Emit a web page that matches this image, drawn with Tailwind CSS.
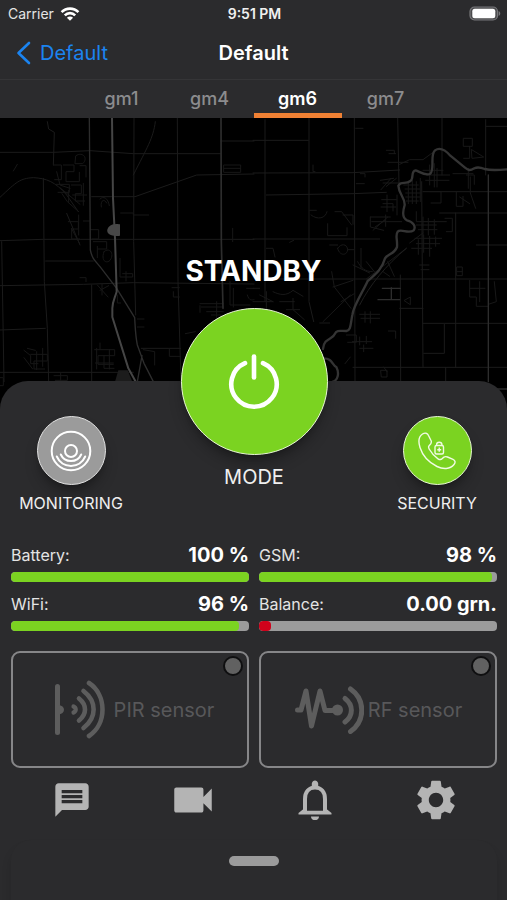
<!DOCTYPE html>
<html lang="en">
<head>
<meta charset="utf-8">
<meta name="viewport" content="width=device-width, initial-scale=1">
<title>Default</title>
<script src="https://cdn.jsdelivr.net/npm/@tailwindcss/browser@4"></script>
</head>
<body class="flex min-h-screen flex-col bg-[#2b2b2d] font-['Inter','Liberation_Sans',sans-serif] text-white">

<!-- Status bar -->
<div class="grid h-7 grid-cols-3 items-center pl-2 pr-1.5 text-sm leading-4">
  <div class="flex items-center gap-1.5 text-[#e4e4e4]">
    <span>Carrier</span>
    <svg class="h-4 w-5" viewBox="0 0 20 16" fill="none" stroke="#fff" stroke-width="2.6" aria-hidden="true">
      <path d="M1.6 6.2C6.2 1.4 13.8 1.4 18.4 6.2"/>
      <path d="M4.8 9.3C7.7 6.4 12.3 6.4 15.2 9.3"/>
      <path d="M10 14.8 6.9 11.7C8.6 10 11.4 10 13.1 11.7Z" fill="#fff" stroke="none"/>
    </svg>
  </div>
  <div class="text-center font-semibold text-[#f0f0f0]">9:51 PM</div>
  <svg class="h-4 w-8 justify-self-end" viewBox="0 0 32 16" aria-hidden="true">
    <rect x="1" y="1" width="27.500" height="13" rx="4.500" fill="#4b4b4d" stroke="#77777a" stroke-width="1.200"/>
    <rect x="3.300" y="2.800" width="23" height="9.500" rx="2.500" fill="#fff"/>
    <path d="M29.600 5c2.200.8 2.200 4.200 0 5z" fill="#77777a"/>
  </svg>
</div>

<!-- Navigation bar -->
<header class="grid h-13 grid-cols-3 items-center border-b border-[#353537] px-4 pb-0.5 text-xl leading-6">
  <a href="#" class="flex items-center gap-2 text-[#1b84f0]">
    <svg class="h-6 w-4" viewBox="0 0 16 24" fill="none" stroke="currentColor" stroke-width="2.600" stroke-linecap="round" stroke-linejoin="round" aria-hidden="true"><path d="M13 2 2.500 12 13 22"/></svg>
    <span>Default</span>
  </a>
  <h1 class="text-center text-xl font-semibold leading-6">Default</h1>
</header>

<nav class="flex justify-center text-[18px] font-medium leading-6 text-[#8c8c8e]">
  <a href="#" class="w-22 border-b-5 border-transparent pb-0.5 pt-[7px] text-center">gm1</a>
  <a href="#" class="w-22 border-b-5 border-transparent pb-0.5 pt-[7px] text-center">gm4</a>
  <a href="#" class="w-22 border-b-5 border-[#f08134] pb-0.5 pt-[7px] text-center font-semibold text-white" aria-current="page">gm6</a>
  <a href="#" class="w-22 border-b-5 border-transparent pb-0.5 pt-[7px] text-center">gm7</a>
</nav>

<main class="relative isolate flex flex-1 flex-col bg-black">
  <!-- Map backdrop -->
  <svg class="absolute inset-x-0 top-0 -z-10 h-[300px] w-full" viewBox="0 9 1521 900" preserveAspectRatio="xMidYMin slice" fill="none" stroke-linecap="round" stroke-linejoin="round" aria-hidden="true">
    <!-- section roads, west -->
    <g stroke="#1b1b1b" stroke-width="3">
      <path d="M0 112H160L270 107 400 116H662M0 377 130 373H762M0 512 250 508 400 503 762 507M0 645 136 640M0 772H400M0 247C50 200 60 190 100 188 140 190 165 200 200 240L235 290"/>
      <path d="M130 190 133 500 142 640 146 800M5 380 12 800M402 9 401 380 407 600M532 9 534 500 543 800M275 510 275 800M137 438H280M275 245H405L590 180 762 177M662 78H762M466 20C460 70 440 100 400 180M424 700H542M142 20 146 42 163 52 160 150M200 295 240 390"/>
    </g>
    <!-- subdivisions, west -->
    <g stroke="#171717" stroke-width="3">
      <path d="M160 150h24v44h-20M190 150h32v20h-24v30h40v-28M228 122c20-14 38 8 20 24h-22zM240 152h18v34M168 208h40v24h-34M214 210h30v26h-18v22h28M186 236l16 24 34 30M206 226v36M180 218l60 50M250 205v66M218 240h42M170 170l10 40 30 10"/>
      <path d="M205 320h30v22h-20v30h24M236 300v60M250 318h18M214 340l24 44M272 344h24v28h-20M280 380h40v22h-28M292 394v34M312 410c18-16 32 8 18 26-12 12-28 0-18-26M300 252c10-10 24-4 28 20M304 276c-4-18 8-28 16-12M362 294h38v6h46M360 430v56h38v-10h-30M378 470v28M240 488h18v12M292 510l32 36M300 526l26-14M306 508v32M352 540v24h10"/>
      <path d="M72 706l20 16v24h22M82 700l24 6M92 718h50v20h-40v24h32M72 728l26 34M110 710v54M128 700v54M284 704h60v18h-50v26h46M290 700v62M312 722v38h30M328 704v58M286 744h54M300 684v18M162 782h40v14h-36M182 772v28M40 168l12-20M412 612h20M412 636h20M508 700v24h34M430 704l34 6v40M0 788h10v24H0M516 518h22M520 530v16h18M672 150h50v22h-50zM672 160h50M698 340v40"/>
      <path d="M600 566h70M604 576h66M620 590h50M600 572v20M650 560v56M634 600h30v20M740 520h22M742 540c6 20 14 14 20 14M556 656l30-6M690 500v70h60M700 520v56"/>
    </g>
    <path d="M345 800l10-34h28l14 34z" fill="#1c1c1c"/>
    <g stroke="#2d2d2d" stroke-width="4">
      <path d="M268 9 271 405C276 430 284 436 300 455L350 520 404 608C406 640 406 660 412 690L432 745 460 800M426 722 412 800"/>
      <path d="M663 9 664 380 669 580" stroke-width="5"/>
    </g>
    <path d="M336 9 339 250 345 370 350 530C344 550 337 560 337 580V606L385 760 406 798" stroke="#454545" stroke-width="6"/>
    <path d="M326 336c12-14 34-8 34-8v34s-22 4-32-4c-8-6-8-14-2-22z" fill="#484848"/>

    <g transform="translate(759 0)">
      <!-- section roads, east -->
      <g stroke="#1b1b1b" stroke-width="3">
        <path d="M0 76H166M0 174 300 173 440 165M40 240 300 236 400 232M0 372H380M40 492H762M510 230H762M560 294H762M670 390H762M510 625H762M440 580H510M300 757 762 757M512 715H574V628M700 34H762"/>
        <path d="M36 14V560M168 9V560L182 620M304 9 306 800M434 9 438 210M442 480 443 800M506 200 510 757M608 294V757M567 9V180M698 14V180M578 757V800M40 530V600"/>
      </g>
      <!-- towns, east -->
      <g stroke="#181818" stroke-width="3">
        <path d="M405 142h60M400 106h24v10M408 116h20M440 148l30-14h40l30-22M382 196l40-6M384 224l30-34M390 204h60M400 214l30-24M452 210h44M456 222h44M458 234h46M458 246h44M460 258h36M466 200v66M478 196v70M490 200v66M502 190v70M386 254h44M390 266h30v22M402 240v50M384 276h44M432 240v60"/>
        <path d="M510 166h60M530 150v60M544 146v70M520 180h70M518 196h70M552 160v56M530 230h34v34h-30M610 230v44h20v-30M640 180h24v28M600 176h60M646 160v60M652 186v48l16 46M620 246l30 20M632 70h26v24h-26zM650 94v36h-18M656 104l36 22-34 4z"/>
        <path d="M352 306h60M352 306v30l40 10M356 320h90M366 336l30-20M360 346l44-40M398 300v34M490 290v30h60M490 330h60M496 344h56M500 320h80M510 306v60M526 310v50M544 314v44M576 310h22v40h-18M486 370h80M490 386h70M496 374v44M512 360v52M530 364v60M548 366v28M470 384l40-30M476 400h60M500 450h28M504 464h24"/>
        <path d="M170 286h20M174 300c20 16 44 10 48-10M246 290h20l30 40M270 300h30v28M224 326v36h58v-24M254 400c10-16 28-14 30 4-2 20-26 18-30-4zM230 390h24M284 404h18M300 450l50 24M314 440c10 20 24 30 44 30M324 400v60M340 440l24 30M236 470l8 46 50 64M240 516l60-20M264 560l40-24M210 620 292 540M200 624h30M390 470l20 14M404 440l20 44M340 492 460 400"/>
        <path d="M0 560h60M20 540l40 20M60 530c20 10 40 14 60-4l30 18M80 560h44M100 584h40M120 550v34l34 30M0 520h20M320 598h60M324 610h56M336 590v32M352 590v34M454 556l18-10v22zM280 660h30v22h-26M298 680h58M320 666v24M340 664v22M320 700h40M332 690v20M384 766h18v20h-16zM392 756l10 14M276 746l16-20M650 496v50h20v28h34M650 520h46M680 500v60M724 500l6 60-24 8M612 456h16v26h-16zM612 470h16M308 40h22M180 150v20h6M322 176h14v10M310 206h24M110 382l12-6M40 400h20l6 26M406 648h22v22"/>
      </g>
      <path d="M706 180V800M730 822H762" stroke="#2d2d2d" stroke-width="4"/>
      <path d="M375 554H440M388 520h54M415 518v36" stroke="#2d2d2d" stroke-width="4"/>
      <path d="M320 570C350 510 400 450 460 400" stroke="#1e1e1e" stroke-width="3"/>
      <!-- river -->
      <path d="M762 163C730 166 710 166 695 162 675 154 668 158 664 160 650 168 646 166 636 158L592 122C576 104 560 96 546 106 530 120 546 162 532 176 518 184 500 170 488 166 472 168 484 190 472 198 458 210 444 196 436 212 438 240 456 246 455 270 446 300 452 312 462 316 480 320 490 334 482 346 466 358 444 340 434 350 426 360 434 374 432 396 424 418 404 416 396 430 388 460 372 474 344 498 330 530 302 570 298 600 292 630 294 646 280 648 262 648 250 644 246 656 240 674 212 668 210 702M212 730C240 730 236 750 250 756 260 776 254 796 240 800" stroke="#343434" stroke-width="7"/>
    </g>
  </svg>

  <h2 class="pt-[137px] text-center text-[28px] font-bold leading-8">STANDBY</h2>

  <!-- Control panel -->
  <div class="mt-[94px] flex flex-1 flex-col rounded-t-[28px] bg-[#2b2b2d] pl-[11px] pr-2.5">
    <div class="flex items-start justify-between">
      <button type="button" class="flex w-30 flex-col items-center pt-[35px] text-base leading-5 text-[#efefef]">
        <span class="flex size-[69px] items-center justify-center rounded-full border border-[#e2e2e2] bg-[#9b9b9b] shadow-lg shadow-black/30">
          <svg class="size-11" viewBox="0 0 44 44" fill="none" stroke="#fff" stroke-width="2" stroke-linecap="round" aria-hidden="true">
            <circle cx="22" cy="22" r="19.300"/>
            <circle cx="22" cy="22" r="6"/>
            <path d="M11.800 25.500A11.200 11.200 0 0 0 32.200 25.500"/>
            <path d="M7.800 27.500A15.400 15.400 0 0 0 36.200 27.500"/>
          </svg>
        </span>
        <span class="mt-2">MONITORING</span>
      </button>

      <button type="button" class="-mt-[73px] flex flex-col items-center text-xl leading-6 text-[#efefef]">
        <span class="flex size-[147px] items-center justify-center rounded-full border border-[#e8f8d4] bg-[#7bd321] shadow-lg shadow-black/30">
          <svg class="size-14" viewBox="0 0 56 56" fill="none" stroke="#fff" stroke-width="4.600" stroke-linecap="round" aria-hidden="true">
            <path d="M28 2.500V23.500"/>
            <path d="M19 9.200A22.700 22.700 0 1 0 37 9.200"/>
          </svg>
        </span>
        <span class="mt-[10px]">MODE</span>
      </button>

      <button type="button" class="flex w-30 flex-col items-center pt-[35px] text-base leading-5 text-[#efefef]">
        <span class="flex size-[69px] items-center justify-center rounded-full border border-[#e8f8d4] bg-[#7bd321] shadow-lg shadow-black/30">
          <svg class="size-10" viewBox="0 0 40 40" fill="none" stroke="#f1fbe4" stroke-width="1.400" stroke-linejoin="round" aria-hidden="true">
            <path d="M5.500 3C8 1.500 10.500 2 11.500 4.500L14 9.500C15 11.500 14 13 12.300 14.600 11.200 15.600 11.500 17 12.500 18.500 14.500 22 17.500 25.500 21 27.800 22.800 29 24 29 25.300 27.500 26.800 25.600 28.500 25.200 30.500 26L36 28.300C38.500 29.400 38.600 31.500 37 33.500 33 38.500 26 38.500 20 35.500 12 31.500 5.500 24.500 3 16.500 1.300 11 1.700 5.500 5.500 3Z"/>
            <rect x="18" y="14.500" width="8.500" height="8.500" rx="1.500"/>
            <path d="M19.600 14.500V13.500C19.600 10.500 24.900 10.500 24.900 13.500V14.500M22.250 16.600V20.800M20.300 18.700H24.200"/>
          </svg>
        </span>
        <span class="mt-2">SECURITY</span>
      </button>
    </div>

    <!-- Readings -->
    <dl class="mt-7 grid grid-cols-2 gap-x-2.5 gap-y-2">
      <div>
        <div class="flex h-[31px] items-center justify-between pb-1">
          <dt class="text-base leading-6 text-[#e4e4e4]">Battery:</dt>
          <dd class="text-xl font-bold leading-6">100 %</dd>
        </div>
        <div class="h-2.5 overflow-hidden rounded-[4px] bg-[#9b9b9b]"><div class="h-full rounded-[4px] bg-[#7bd321]" style="width:100%"></div></div>
      </div>
      <div>
        <div class="flex h-[31px] items-center justify-between pb-1">
          <dt class="text-base leading-6 text-[#e4e4e4]">GSM:</dt>
          <dd class="text-xl font-bold leading-6">98 %</dd>
        </div>
        <div class="h-2.5 overflow-hidden rounded-[4px] bg-[#9b9b9b]"><div class="h-full rounded-[4px] bg-[#7bd321]" style="width:98%"></div></div>
      </div>
      <div>
        <div class="flex h-[31px] items-center justify-between pb-1">
          <dt class="text-base leading-6 text-[#e4e4e4]">WiFi:</dt>
          <dd class="text-xl font-bold leading-6">96 %</dd>
        </div>
        <div class="h-2.5 overflow-hidden rounded-[4px] bg-[#9b9b9b]"><div class="h-full rounded-[4px] bg-[#7bd321]" style="width:96%"></div></div>
      </div>
      <div>
        <div class="flex h-[31px] items-center justify-between pb-1">
          <dt class="text-base leading-6 text-[#e4e4e4]">Balance:</dt>
          <dd class="text-xl font-bold leading-6">0.00 grn.</dd>
        </div>
        <div class="h-2.5 overflow-hidden rounded-[4px] bg-[#9b9b9b]"><div class="h-full rounded-[4px] bg-[#d0021b]" style="width:5%"></div></div>
      </div>
    </dl>

    <!-- Sensors -->
    <div class="mt-5 grid grid-cols-2 gap-x-2.5 text-xl leading-6 text-[#58585a]">
      <button type="button" class="relative flex h-[117px] items-center justify-center gap-2 rounded-[9px] border-2 border-[#868688] pl-1">
        <svg class="h-15 w-14 shrink-0" viewBox="0 0 56 60" fill="none" stroke="#5d5d5d" stroke-linecap="round" aria-hidden="true">
          <path d="M7.500 6.500V52.500" stroke-width="5"/>
          <path d="M8 25C16 25 16 34.500 8 34.500Z" fill="#5d5d5d" stroke="none"/>
          <path d="M23.500 26.500C26.500 28 26.500 31 23.500 32.500" stroke-width="4.200"/>
          <path d="M29 18.500C37 25 37 34 29 40.500" stroke-width="4.600"/>
          <path d="M33.500 11C47 21.500 47 37.500 33.500 48" stroke-width="4.600"/>
          <path d="M39 3C57 15 57 44 39 56" stroke-width="4.600"/>
        </svg>
        <span>PIR sensor</span>
        <span class="absolute right-1 top-[3px] size-5 rounded-full border-2 border-[#0f0f10] bg-[#616161]"></span>
      </button>
      <button type="button" class="relative flex h-[117px] items-center justify-center gap-1 rounded-[9px] border-2 border-[#868688]">
        <svg class="h-12 w-[70px] shrink-0" viewBox="0 0 70 48" fill="none" stroke="#5d5d5d" stroke-linecap="round" stroke-linejoin="round" aria-hidden="true">
          <path d="M3.500 24H7L12 5 17.500 40 26 5 31 24.500H42" stroke-width="5"/>
          <circle cx="43.500" cy="24" r="5.500" fill="#5d5d5d" stroke="none"/>
          <path d="M51 12.500C59.500 19 59.500 29.500 51 36" stroke-width="5"/>
          <path d="M56.500 3C71.500 13.500 71.500 35 56.500 45.500" stroke-width="5"/>
        </svg>
        <span>RF sensor</span>
        <span class="absolute right-1 top-[3px] size-5 rounded-full border-2 border-[#0f0f10] bg-[#616161]"></span>
      </button>
    </div>

    <!-- Actions -->
    <div class="mt-3 grid grid-cols-4 justify-items-center text-[#b4b4b4]">
      <button type="button" aria-label="Messages"><svg class="size-10" viewBox="0 0 24 24" fill="currentColor"><path d="M20 2H4c-1.100 0-2 .9-2 2v18l4-4h14c1.100 0 2-.9 2-2V4c0-1.100-.9-2-2-2zM18.200 14H5.800v-2h12.400v2zm0-3H5.800V9h12.400v2zm0-3H5.800V6h12.400v2z"/></svg></button>
      <button type="button" aria-label="Video"><svg class="size-[50px] -my-[5px]" viewBox="0 0 24 24" fill="currentColor"><path d="M17 10.500V7c0-.55-.45-1-1-1H4c-.55 0-1 .45-1 1v10c0 .55.45 1 1 1h12c.55 0 1-.45 1-1v-3.500l4 4v-11l-4 4z"/></svg></button>
      <button type="button" aria-label="Alerts"><svg class="size-10" viewBox="0 0 40 40" fill="none" stroke="currentColor"><path d="M10 34V19C10 12 14 7.500 20 7.500S30 12 30 19V34" stroke-width="4"/><path d="M3.500 34.500V33L8.500 29V30.800H31.500V29L36.500 33V34.500ZM16.800 6.500V3.500C17.500-.5 22.500-.5 23.200 3.500V6.500ZM16 36.500H24C24 41.500 16 41.500 16 36.500Z" fill="currentColor" stroke="none"/></svg></button>
      <button type="button" aria-label="Settings"><svg class="size-12 -my-1" viewBox="0 0 24 24" fill="currentColor"><path d="M19.140 12.940c.04-.3.060-.61.060-.94 0-.32-.02-.64-.07-.94l2.030-1.580c.18-.14.23-.41.12-.61l-1.920-3.320c-.12-.22-.37-.29-.59-.22l-2.390.96c-.5-.38-1.030-.7-1.620-.94l-.36-2.540c-.04-.24-.24-.41-.48-.41h-3.840c-.24 0-.43.17-.47.41l-.36 2.540c-.59.24-1.130.57-1.620.94l-2.390-.96c-.22-.08-.47 0-.59.22L2.740 8.870c-.12.21-.08.47.12.61l2.030 1.580c-.05.3-.09.63-.09.94s.02.64.07.94l-2.030 1.580c-.18.14-.23.41-.12.61l1.920 3.320c.12.22.37.29.59.22l2.390-.96c.5.38 1.030.7 1.620.94l.36 2.540c.05.24.24.41.48.41h3.840c.24 0 .44-.17.47-.41l.36-2.540c.59-.24 1.130-.56 1.620-.94l2.390.96c.22.080.47 0 .59-.22l1.920-3.320c.12-.22.070-.47-.12-.61l-2.010-1.580zM12 15.600c-1.980 0-3.600-1.620-3.600-3.600s1.620-3.600 3.600-3.600 3.600 1.620 3.600 3.600-1.620 3.600-3.600 3.600z"/></svg></button>
    </div>

    <!-- Drawer -->
    <div class="mt-5 flex flex-1 justify-center rounded-t-[20px] bg-[#2b2b2d] pt-4 shadow-[0_8px_10px_rgba(0,0,0,0.15)]">
      <button type="button" aria-label="Open drawer" class="h-2.5 w-[50px] rounded-full bg-[#9b9b9b]"></button>
    </div>
  </div>
</main>
</body>
</html>
